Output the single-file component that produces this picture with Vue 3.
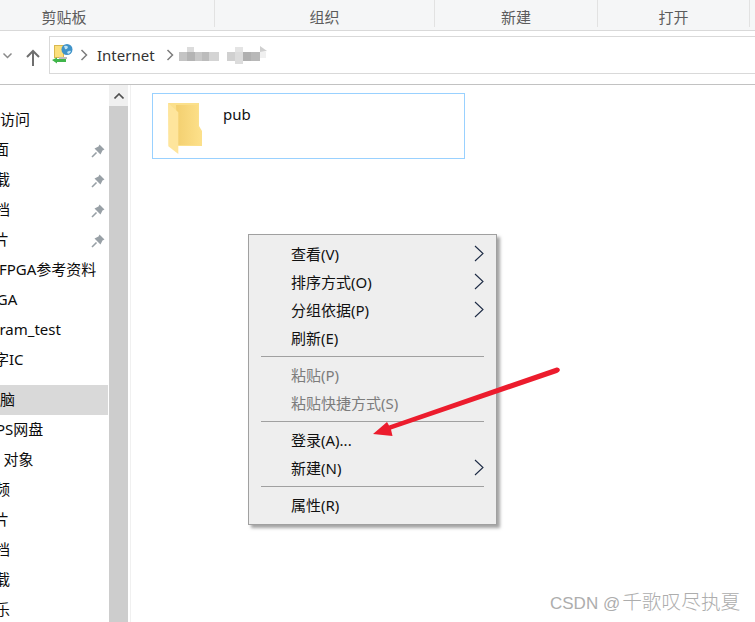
<script setup>
const groups = ['剪贴板', '组织', '新建', '打开']
const rows1 = [
  { t: '快速访问', x: -30 },
  { t: '桌面', x: -21, pin: true },
  { t: '下载', x: -20, pin: true },
  { t: '文档', x: -20, pin: true },
  { t: '图片', x: -21, pin: true },
  { t: 'FPGA参考资料', x: -1 },
  { t: 'FPGA', x: -20 },
  { t: 'sdram_test', x: -17 },
  { t: '数字IC', x: -21 },
]
const rows2 = [
  { t: '此电脑', x: -30, active: true },
  { t: 'WPS网盘', x: -18 },
  { t: '3D 对象', x: -20 },
  { t: '视频', x: -20 },
  { t: '图片', x: -21 },
  { t: '文档', x: -20 },
  { t: '下载', x: -20 },
  { t: '音乐', x: -20 },
]
const blur = [
  [187, 48, 7, 5, '#dcdcdc'], [179, 53, 8, 9, '#c4c4c4'], [187, 53, 8, 9, '#b4b4b4'],
  [195, 53, 7, 9, '#c8c8c8'], [202, 53, 7, 9, '#bcbcbc'], [209, 53, 10, 9, '#d4d4d4'],
  [235, 48, 8, 5, '#e4e4e4'], [227, 53, 8, 9, '#d0d0d0'], [235, 53, 8, 12, '#dcdcdc'],
  [243, 53, 8, 9, '#b0b0b0'], [251, 53, 9, 9, '#b8b8b8'], [260, 53, 6, 6, '#f0f0f0'],
]
const menu = [
  [{ t: '查看(V)', sub: true }, { t: '排序方式(O)', sub: true }, { t: '分组依据(P)', sub: true }, { t: '刷新(E)' }],
  [{ t: '粘贴(P)', off: true }, { t: '粘贴快捷方式(S)', off: true }],
  [{ t: '登录(A)...' }, { t: '新建(N)', sub: true }],
  [{ t: '属性(R)' }],
]
</script>

<template>
  <div class="win">
    <div class="ribbon">
      <div v-for="g in groups" :key="g" class="group">{{ g }}</div>
    </div>

    <div class="addr">
      <svg class="nav" width="49" height="38" viewBox="0 0 49 38">
        <path d="M3.5 17.5 L7.5 21.5 L11.5 17.5" fill="none" stroke="#8a8a8a" stroke-width="1.5" />
        <path d="M33 30 V15 M27 21 L33 15 L39 21" fill="none" stroke="#6f6f6f" stroke-width="2" />
      </svg>
      <div class="addr-box">
        <svg class="net" width="22" height="22" viewBox="0 0 22 22">
          <rect x="2.5" y="2.5" width="9" height="12" fill="#fbdf7c" stroke="#d9b84f" />
          <circle cx="15" cy="6.5" r="5.5" fill="#3f93c9" />
          <path d="M12 3 q3 -1 4 1 q-1 3 -3 2 z M15 9 q3 -2 4 -1 q-1 3 -3 3 z" fill="#bfe3f2" />
          <rect x="7" y="14" width="8" height="2" fill="#bdbdbd" />
          <path d="M0 17 L5 14.5 V16 H14 V19 H5 V20.5 Z" fill="#3fb54a" />
        </svg>
        <svg class="crumb" width="8" height="12" viewBox="0 0 8 12"><path d="M1.5 1 L6.5 6 L1.5 11" fill="none" stroke="#7d7d7d" stroke-width="1.5" /></svg>
        <span class="addr-text">Internet</span>
        <svg class="crumb crumb2" width="8" height="12" viewBox="0 0 8 12"><path d="M1.5 1 L6.5 6 L1.5 11" fill="none" stroke="#7d7d7d" stroke-width="1.5" /></svg>
        <svg class="mosaic" width="90" height="20" viewBox="178 46 90 20">
          <rect v-for="(b, i) in blur" :key="i" :x="b[0]" :y="b[1]" :width="b[2]" :height="b[3]" :fill="b[4]" />
          <path d="M260 47 L267 52 L260 53 Z" fill="#cfcfcf" />
        </svg>
      </div>
    </div>

    <div class="body">
      <aside class="side">
        <div class="tree">
          <div class="tree-top">
            <div v-for="r in rows1" :key="r.t" class="row">
              <span class="label" :style="{ marginLeft: r.x + 'px' }">{{ r.t }}</span>
              <svg v-if="r.pin" class="pin" width="14" height="14" viewBox="0 0 14 14">
                <path d="M8.5 0.5 L13.5 5.5 L11.5 6.5 L9.5 10.5 L3.5 4.5 L7.5 2.5 Z" fill="#98a0a6" />
                <path d="M5.5 8.5 L1 13" stroke="#98a0a6" stroke-width="1.6" fill="none" />
              </svg>
            </div>
          </div>
          <div class="tree-bottom">
            <div v-for="r in rows2" :key="r.t" class="row" :class="{ active: r.active }">
              <span class="label" :style="{ marginLeft: r.x + 'px' }">{{ r.t }}</span>
            </div>
          </div>
        </div>
        <div class="scroll">
          <div class="scroll-btn">
            <svg width="10" height="6" viewBox="0 0 10 6"><path d="M0.5 5.5 L5 1 L9.5 5.5" fill="none" stroke="#505050" stroke-width="1.6" /></svg>
          </div>
        </div>
      </aside>

      <main class="content">
        <div class="tile">
          <svg class="folder" width="38" height="53" viewBox="166 101 38 53">
            <defs>
              <linearGradient id="fback" x1="0" y1="0" x2="1" y2="0">
                <stop offset="0" stop-color="#f3cf6f" />
                <stop offset="1" stop-color="#fde08a" />
              </linearGradient>
            </defs>
            <path d="M168 102 H199 V125 L202 130 V145 H178 Z" fill="#fbe08c" />
            <path d="M176 104 H198 V126 L201 131 V144 H178 Z" fill="url(#fback)" />
            <path d="M168 102 L178.3 111.3 V153 L168.3 145.3 Z" fill="#fee59c" />
          </svg>
          <span class="tile-name">pub</span>
        </div>
      </main>
    </div>

    <div class="menu">
      <template v-for="(sec, si) in menu" :key="si">
        <div v-if="si" class="sep"></div>
        <div v-for="m in sec" :key="m.t" class="item" :class="{ off: m.off }">
          <span>{{ m.t }}</span>
          <svg v-if="m.sub" class="sub" width="10" height="17" viewBox="0 0 10 17">
            <path d="M1 1 L9 8.5 L1 16" fill="none" stroke="#1c2a44" stroke-width="1.1" />
          </svg>
        </div>
      </template>
    </div>

    <svg class="arrow" width="755" height="622" viewBox="0 0 755 622">
      <path d="M556.5 367.5 Q559.5 367 560 370 Q559.5 372 557 373 L391 429.5 L392.5 436 L373 434 L387 422 L389 425.5 Z" fill="#ec1c2d" />
    </svg>

    <div class="mark"><span class="mark-en">CSDN @</span><span class="mark-cn">千歌叹尽执夏</span></div>
  </div>
</template>

<style>
html, body { margin: 0; background: #fff; }
</style>

<style scoped>
.win {
  position: relative;
  width: 755px;
  height: 622px;
  overflow: hidden;
  display: flex;
  flex-direction: column;
  background: #fff;
  font-family: "Noto Sans", "Noto Sans CJK SC", sans-serif;
  font-size: 15px;
  color: #111;
}
.ribbon {
  flex: none;
  height: 30px;
  margin-left: -86px;
  display: grid;
  grid-template-columns: 301px 220px 163px 152px 10px;
  background: #f5f6f7;
  border-bottom: 1px solid #d9d9d9;
}
.group {
  height: 27px;
  border-right: 1px solid #e2e2e2;
  color: #5c5c5c;
  font-size: 15px;
  line-height: 34px;
  text-align: center;
}
.addr {
  flex: none;
  height: 54px;
  padding-top: 5px;
  box-sizing: border-box;
  display: flex;
  align-items: flex-start;
  border-bottom: 1px solid #c2c2c2;
}
.nav { flex: none; }
.addr-box {
  flex: 1;
  height: 38px;
  box-sizing: border-box;
  border: 1px solid #d9d9d9;
  border-right: 0;
  display: flex;
  align-items: center;
}
.net { margin-left: 2px; flex: none; margin-top: -3px; }
.crumb { flex: none; margin-left: 6px; }
.addr-text { margin-left: 9px; width: 59px; font-size: 15px; color: #333; line-height: 20px; }
.crumb2 { margin-left: 10px; }
.mosaic { margin-left: 4px; flex: none; filter: blur(0.6px); }
.body { flex: 1; display: flex; min-height: 0; }
.side {
  flex: none;
  width: 131px;
  display: flex;
  border-right: 1px solid #f0f0f0;
  box-sizing: border-box;
}
.tree {
  width: 109px;
  padding-top: 20px;
  overflow: hidden;
  display: flex;
  flex-direction: column;
  gap: 10px;
}
.row {
  position: relative;
  height: 30px;
  width: 108px;
  box-sizing: border-box;
  padding-bottom: 2px;
  display: flex;
  align-items: center;
  white-space: nowrap;
  line-height: 28px;
  font-size: 15px;
  color: #0c0c0c;
  flex: none;
}
.row.active { background: #d9d9d9; }
.label { flex: none; }
.pin { position: absolute; left: 91px; top: 9px; }
.scroll {
  width: 19px;
  background: #cdcdcd;
  flex: none;
}
.scroll-btn {
  height: 21px;
  background: #f0f0f0;
  display: flex;
  align-items: center;
  justify-content: center;
}
.content { flex: 1; padding: 8px 0 0 21px; }
.tile {
  width: 313px;
  height: 66px;
  box-sizing: border-box;
  border: 1px solid #99d1ff;
  display: flex;
  align-items: flex-start;
}
.folder { flex: none; margin: 8px 0 0 13px; }
.tile-name { margin: 9px 0 0 19px; font-size: 15px; line-height: 22px; color: #111; }
.menu {
  position: absolute;
  left: 248px;
  top: 234px;
  width: 249px;
  height: 291px;
  box-sizing: border-box;
  padding: 5px 12px 0;
  background: #eeeeee;
  border: 1px solid #a0a0a0;
  box-shadow: 3px 3px 3px rgba(90, 90, 90, 0.55);
}
.item {
  position: relative;
  height: 28px;
  padding-left: 30px;
  display: flex;
  align-items: center;
  font-size: 15px;
  line-height: 28px;
  color: #111;
}
.item.off { color: #7c7c7c; }
.sub { position: absolute; right: 0; top: 5px; }
.sep { height: 1px; margin: 4px 0; background: #a0a0a0; }
.arrow { position: absolute; left: 0; top: 0; pointer-events: none; }
.mark {
  position: absolute;
  left: 550px;
  top: 587px;
  font-family: "Liberation Sans", "Noto Sans CJK SC", sans-serif;
  line-height: 30px;
  color: #adadad;
  white-space: nowrap;
}
.mark-en { font-size: 17px; }
.mark-cn { font-size: 19.7px; font-weight: 300; margin-left: 2px; }
</style>
